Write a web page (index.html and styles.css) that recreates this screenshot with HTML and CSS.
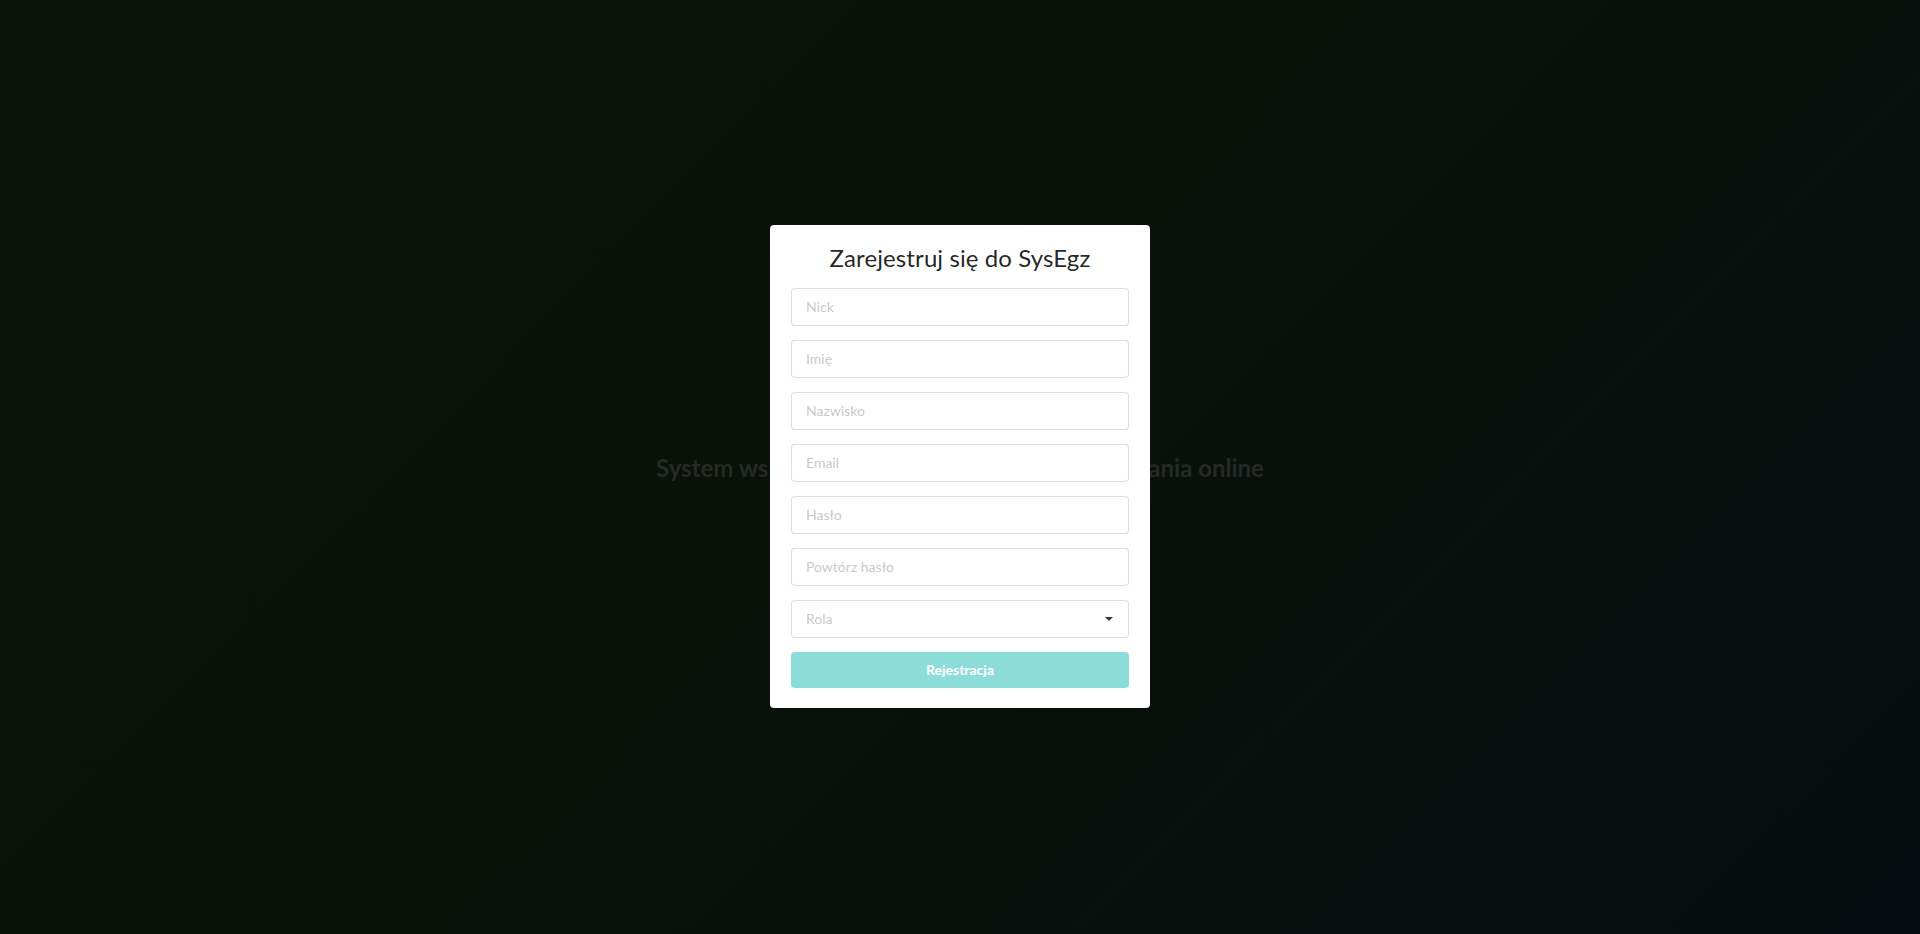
FILE: index.html
```html
<!DOCTYPE html>
<html lang="pl">
<head>
<meta charset="utf-8">
<title>SysEgz</title>
<link rel="stylesheet" href="styles.css">
</head>
<body>
<main class="page">
  <h1 class="hero-title">System wspomagający organizację egzaminowania online</h1>
</main>
<div class="dimmer">
  <div class="modal">
    <h2 class="modal-title">Zarejestruj się do SysEgz</h2>
    <form class="form">
      <div class="field"><input class="input" type="text" placeholder="Nick"></div>
      <div class="field"><input class="input" type="text" placeholder="Imię"></div>
      <div class="field"><input class="input" type="text" placeholder="Nazwisko"></div>
      <div class="field"><input class="input" type="text" placeholder="Email"></div>
      <div class="field"><input class="input" type="password" placeholder="Hasło"></div>
      <div class="field"><input class="input" type="password" placeholder="Powtórz hasło"></div>
      <div class="field">
        <div class="select">
          <span class="select-text">Rola</span>
          <span class="caret"></span>
        </div>
      </div>
      <button class="button" type="button" disabled>Rejestracja</button>
    </form>
  </div>
</div>
</body>
</html>
```

FILE: styles.css
```css
* { box-sizing: border-box; }
html, body { margin: 0; padding: 0; height: 100%; }
body {
  font-family: Lato, "Helvetica Neue", Arial, sans-serif;
  font-size: 14px;
  background: linear-gradient(135deg, #0c1309 0%, #0a1109 45%, #060d10 100%);
  overflow: hidden;
}
.page {
  height: 100%;
  display: flex;
  align-items: center;
  justify-content: center;
  padding-top: 2px;
}
.hero-title {
  margin: 0;
  font-size: 24px;
  font-weight: 700;
  line-height: 1.2857;
  color: #272927;
  text-align: center;
}
.dimmer {
  position: fixed;
  inset: 0;
  display: flex;
  align-items: center;
  justify-content: center;
}
.modal {
  width: 380px;
  background: #fff;
  border-radius: 4px;
  padding: 18px 21px 20px;
  margin-top: -1px;
}
.modal-title {
  margin: 0 0 14px;
  font-size: 24px;
  font-weight: 400;
  line-height: 1.2857;
  letter-spacing: 0.1px;
  color: rgba(0,0,0,.87);
  text-align: center;
}
.form { display: flex; flex-direction: column; }
.field { margin-bottom: 14px; }
.input, .select {
  display: block;
  width: 100%;
  height: 38px;
  margin: 0;
  padding: 9.5px 14px;
  font-family: Lato, "Helvetica Neue", Arial, sans-serif;
  font-size: 14px;
  line-height: 17px;
  color: rgba(0,0,0,.87);
  background: #fff;
  border: 1px solid rgba(34,36,38,.15);
  border-radius: 4px;
  outline: none;
}
.input::placeholder { color: rgba(191,191,191,.87); }
.select {
  display: flex;
  align-items: center;
  justify-content: space-between;
  padding-right: 15px;
}
.select-text { color: rgba(191,191,191,.87); }
.caret {
  width: 0;
  height: 0;
  border-left: 4px solid transparent;
  border-right: 4px solid transparent;
  border-top: 4px solid #333;
  margin-top: 1px;
}
.button {
  display: block;
  width: 100%;
  height: 36px;
  padding: 0;
  border: none;
  border-radius: 4px;
  background: #8cddda;
  color: #fff;
  font-family: Lato, "Helvetica Neue", Arial, sans-serif;
  font-size: 14px;
  font-weight: 700;
  line-height: 1;
  cursor: default;
}
```
